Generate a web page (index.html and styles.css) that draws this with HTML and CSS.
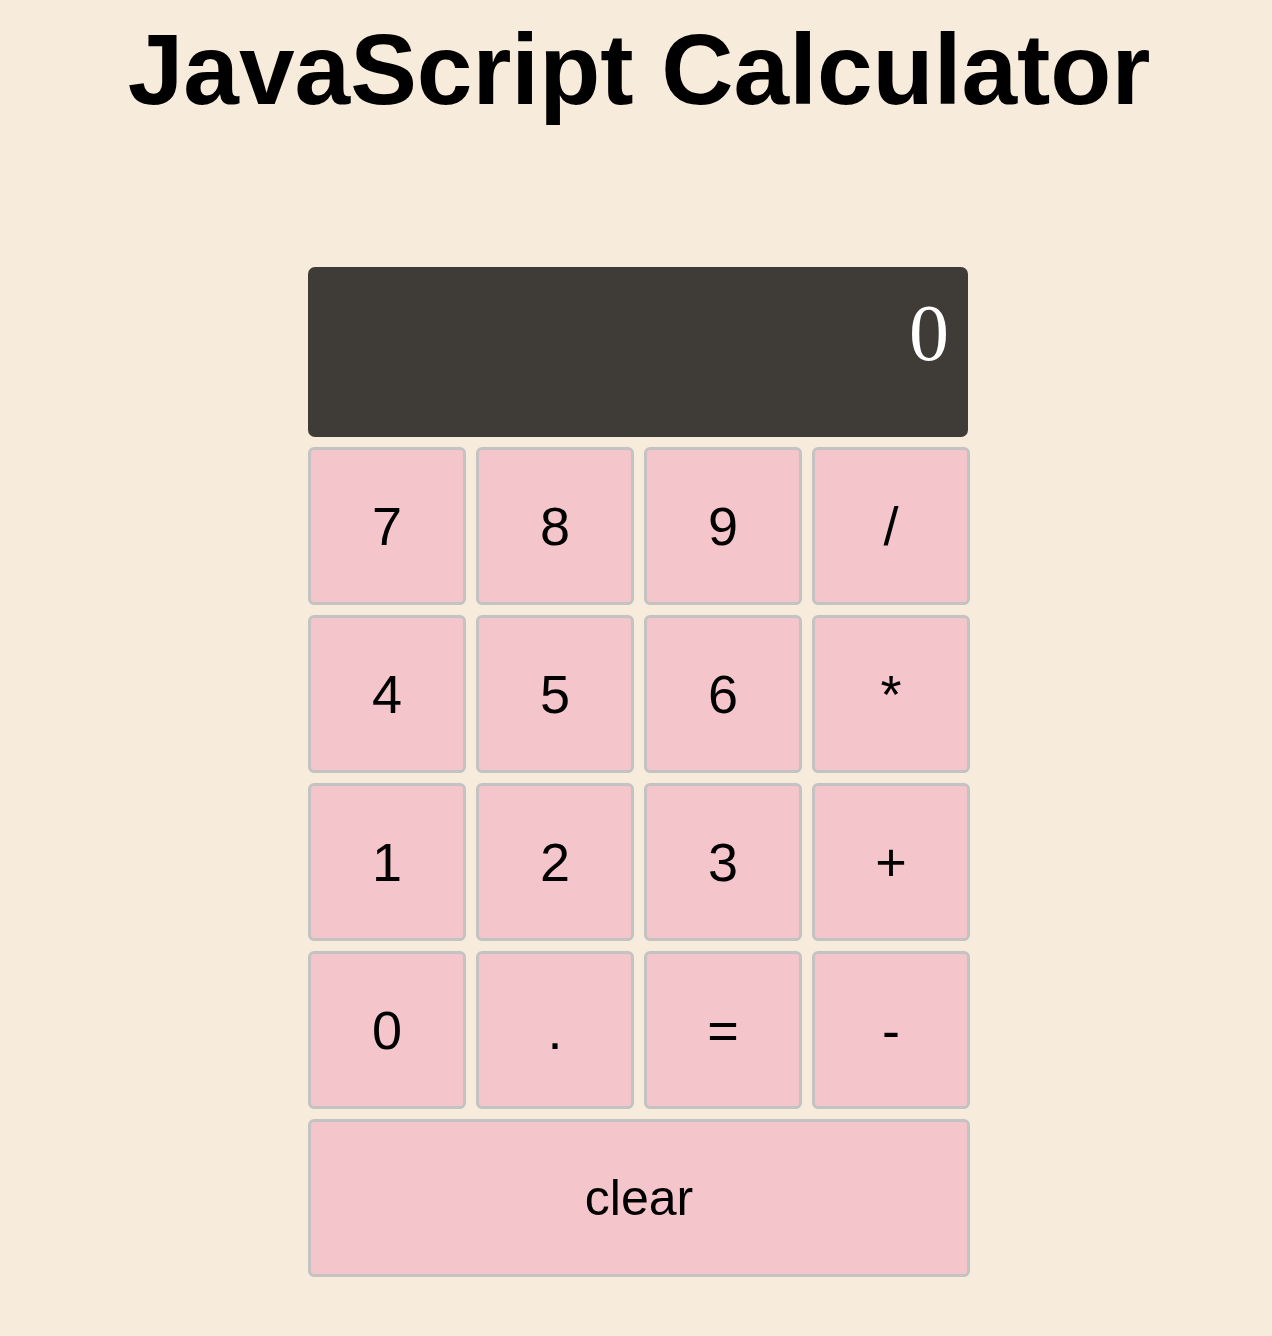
FILE: index.html
```html
<!DOCTYPE html>
<html lang="en">
<head>
<meta charset="utf-8">
<title>JavaScript Calculator</title>
<link rel="stylesheet" href="styles.css">
</head>
<body>
<h1 class="title">JavaScript Calculator</h1>
<div class="calculator">
  <div class="display">0</div>
  <div class="keys">
    <button class="key">7</button>
    <button class="key">8</button>
    <button class="key">9</button>
    <button class="key">/</button>
    <button class="key">4</button>
    <button class="key">5</button>
    <button class="key">6</button>
    <button class="key">*</button>
    <button class="key">1</button>
    <button class="key">2</button>
    <button class="key">3</button>
    <button class="key">+</button>
    <button class="key">0</button>
    <button class="key">.</button>
    <button class="key">=</button>
    <button class="key">-</button>
    <button class="key key-clear">clear</button>
  </div>
</div>
</body>
</html>
```

FILE: styles.css
```css
html, body {
  margin: 0;
  background: #f7ecdb;
}

body {
  padding-left: 6px;
  font-family: "Liberation Sans", Arial, sans-serif;
}

.title {
  margin: 12px 0 0;
  font-family: "Liberation Sans", Arial, sans-serif;
  font-weight: bold;
  font-size: 100px;
  line-height: normal;
  text-align: center;
  color: #000;
}

.calculator {
  width: 662px;
  margin: 140px auto 0;
}

.display {
  box-sizing: border-box;
  width: 660px;
  height: 170px;
  padding: 21px 19px 0 0;
  background: #3f3c37;
  border-radius: 7px;
  color: #fff;
  font-family: "Liberation Serif", "Times New Roman", serif;
  font-size: 80px;
  line-height: normal;
  text-align: right;
}

.keys {
  display: grid;
  grid-template-columns: repeat(4, 158px);
  grid-auto-rows: 158px;
  gap: 10px;
  margin-top: 10px;
}

.key {
  box-sizing: border-box;
  margin: 0;
  padding: 0;
  background: #f4c6cc;
  border: 3px solid #c3c3c3;
  border-radius: 6px;
  color: #000;
  font-family: "Liberation Sans", Arial, sans-serif;
  font-size: 54px;
  line-height: normal;
  text-align: center;
}

.key-clear {
  grid-column: 1 / -1;
  font-size: 50px;
}
```
